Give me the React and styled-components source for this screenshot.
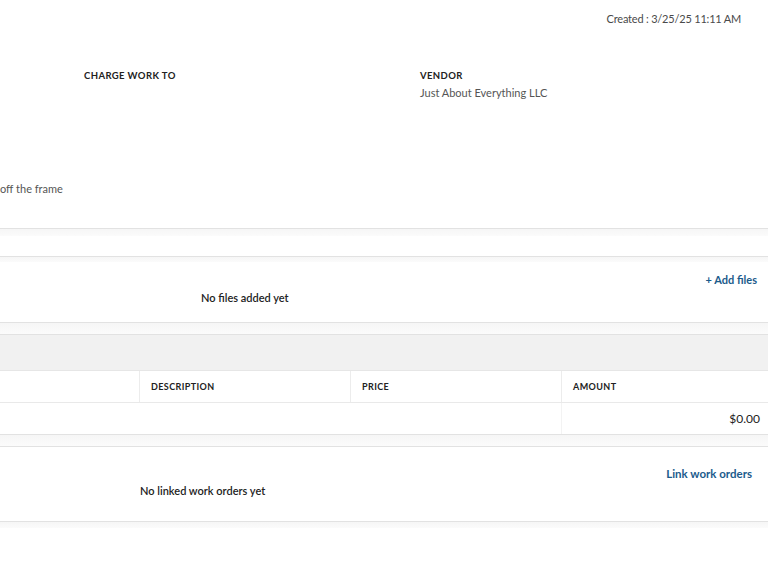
import React from "react";
import styled, { createGlobalStyle } from "styled-components";

const GlobalStyle = createGlobalStyle`
  html, body {
    margin: 0;
    padding: 0;
    background: #fff;
    font-family: Lato, "Liberation Sans", sans-serif;
    color: #333;
  }
`;

const Page = styled.div`
  width: 768px;
  overflow: hidden;
  background: #fff;
`;

const Card = styled.section`
  background: ${(p) => p.bg || "#fff"};
  height: ${(p) => p.h}px;
  border-bottom: 1px solid #e2e2e2;
  border-top: ${(p) => (p.top ? "1px solid #e2e2e2" : "none")};
  box-sizing: border-box;
  position: relative;
`;

const Gap = styled.div`
  height: ${(p) => p.h}px;
  background: linear-gradient(#f6f6f6, #fbfbfb);
`;

const TopCard = styled(Card)`
  display: flex;
  flex-direction: column;
`;

const CreatedRow = styled.div`
  display: flex;
  justify-content: flex-end;
  padding: 12px 27px 0 0;
  font-size: 11px;
  letter-spacing: -0.2px;
  color: #4a4a4a;
`;

const InfoGrid = styled.div`
  display: grid;
  grid-template-columns: 336px 1fr;
  padding: 44px 0 0 84px;
`;

const Label = styled.div`
  font-size: 9.5px;
  font-weight: 700;
  letter-spacing: 0.4px;
  text-transform: uppercase;
  color: #222;
  line-height: 14px;
`;

const Value = styled.div`
  font-size: 11px;
  color: #555;
  line-height: 16px;
  margin-top: 2px;
`;

const Note = styled.div`
  font-size: 11px;
  color: #555;
  margin-top: 81px;
`;

const EmptySection = styled(Card)`
  display: flex;
  align-items: flex-start;
  justify-content: space-between;
`;

const EmptyText = styled.div`
  font-size: 11px;
  font-weight: 600;
  color: #222;
  padding-left: ${(p) => p.left}px;
  padding-top: ${(p) => p.top}px;
`;

const LinkButton = styled.a`
  font-size: ${(p) => p.size || 11}px;
  font-weight: 700;
  color: #1b5b8c;
  text-decoration: none;
  padding-right: ${(p) => p.right}px;
  padding-top: ${(p) => p.pt}px;
  white-space: nowrap;
`;

const HeaderBand = styled.div`
  height: 37px;
  background: #f1f1f1;
  border-top: 1px solid #e2e2e2;
  border-bottom: 1px solid #e6e6e6;
  box-sizing: border-box;
`;

const TableRow = styled.div`
  display: grid;
  grid-template-columns: 139px 211px 211px 1fr;
  height: ${(p) => p.h}px;
  border-bottom: 1px solid ${(p) => p.line || "#e9e9e9"};
  box-sizing: border-box;
`;

const Cell = styled.div`
  display: flex;
  align-items: center;
  justify-content: ${(p) => (p.right ? "flex-end" : "flex-start")};
  padding: 0 ${(p) => (p.right ? 8 : 11)}px 0 11px;
  border-left: ${(p) => (p.first ? "none" : `1px solid ${p.line || "#ececec"}`)};
`;

const HeadText = styled(Label)`
  font-size: 9px;
`;

const Amount = styled.span`
  font-size: 12px;
  color: #222;
`;

export default function App() {
  return (
    <Page>
      <GlobalStyle />
      <TopCard h={229}>
        <CreatedRow>Created : 3/25/25 11:11 AM</CreatedRow>
        <InfoGrid>
          <div>
            <Label>Charge work to</Label>
          </div>
          <div>
            <Label>Vendor</Label>
            <Value>Just About Everything LLC</Value>
          </div>
        </InfoGrid>
        <Note>off the frame</Note>
      </TopCard>
      <Gap h={7} />
      <Card h={21} />
      <Gap h={5} />
      <EmptySection h={61}>
        <EmptyText left={201} top={29}>No files added yet</EmptyText>
        <LinkButton right={11} pt={11}>+ Add files</LinkButton>
      </EmptySection>
      <Gap h={11} />
      <HeaderBand />
      <TableRow h={32}>
        <Cell first />
        <Cell>
          <HeadText>Description</HeadText>
        </Cell>
        <Cell>
          <HeadText>Price</HeadText>
        </Cell>
        <Cell>
          <HeadText>Amount</HeadText>
        </Cell>
      </TableRow>
      <TableRow h={32} line="#e2e2e2">
        <Cell first />
        <Cell first />
        <Cell first />
        <Cell right line="#f3f3f3">
          <Amount>$0.00</Amount>
        </Cell>
      </TableRow>
      <Gap h={11} />
      <EmptySection h={76} top>
        <EmptyText left={140} top={37}>No linked work orders yet</EmptyText>
        <LinkButton size={11.5} right={16} pt={20}>Link work orders</LinkButton>
      </EmptySection>
      <Gap h={6} />
    </Page>
  );
}
